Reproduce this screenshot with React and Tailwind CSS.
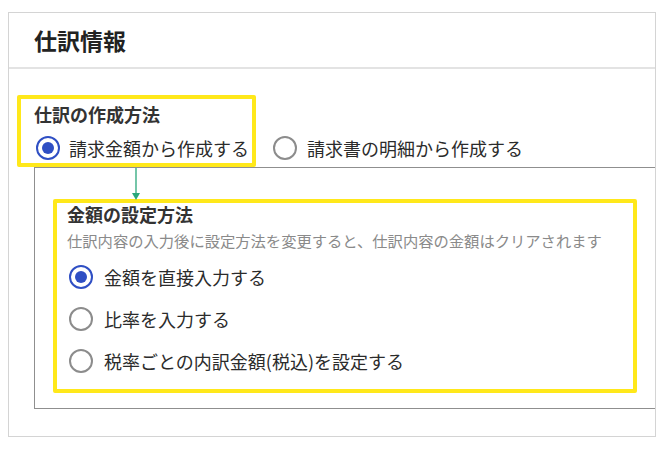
import React from "react";

const font = { fontFamily: '"Noto Sans CJK JP", "Noto Sans", sans-serif' };

function Radio({ checked }) {
  return checked ? (
    <span className="flex h-[24px] w-[24px] shrink-0 items-center justify-center rounded-full border-[2.5px] border-[#2f4fc4]">
      <span className="h-[12px] w-[12px] rounded-full bg-[#2f4fc4]" />
    </span>
  ) : (
    <span className="block h-[24px] w-[24px] shrink-0 rounded-full border-[2.5px] border-[#8c8c8c]" />
  );
}

function Option({ checked, label, gap = "gap-[9px]" }) {
  return (
    <label className={`flex h-[24px] items-center ${gap}`}>
      <span className="ml-[2px] block">
        <Radio checked={checked} />
      </span>
      <span className="text-[18px] leading-[24px] text-[#2b2b2b]">{label}</span>
    </label>
  );
}

const amountOptions = [
  { label: "金額を直接入力する", checked: true },
  { label: "比率を入力する", checked: false },
  { label: "税率ごとの内訳金額(税込)を設定する", checked: false },
];

export default function App() {
  return (
    <div className="min-h-[449px] w-[669px] bg-white pl-[8px] pt-[12px]" style={font}>
      <div className="w-[648px] overflow-hidden border border-[#d4d4d4] bg-white">
        <div className="flex h-[56px] items-center border-b-2 border-[#e3e3e3] pl-[25px]">
          <h2 className="text-[23px] font-bold leading-[30px] text-[#222]">仕訳情報</h2>
        </div>

        <div className="pb-[27px] pl-[8px] pt-[26px]">
          <div className="flex items-end">
            <div className="w-[239px] rounded-[2px] border-4 border-[#ffe81a] pb-[3px] pl-[13px] pt-[3px]">
              <div className="text-[18px] font-bold leading-[24px] text-[#333]">仕訳の作成方法</div>
              <div className="mt-[10px]">
                <Option checked label="請求金額から作成する" />
              </div>
            </div>
            <div className="mb-[7px] ml-[15px]">
              <Option checked={false} label="請求書の明細から作成する" gap="gap-[10px]" />
            </div>
          </div>

          <div className="relative ml-[17px] border border-r-0 border-[#8f8f8f] pb-[15px] pl-[18px] pt-[31px]">
            <svg
              className="absolute left-[96px] top-0"
              width="10"
              height="33"
              viewBox="0 0 10 33"
            >
              <line x1="5" y1="0" x2="5" y2="26" stroke="#2aa77a" strokeWidth="1.3" />
              <path d="M1 25 L9 25 L5 32 Z" fill="#2aa77a" />
            </svg>

            <div className="w-[584px] rounded-[2px] border-4 border-[#ffe81a] pb-[16px] pl-[10px]">
              <div className="text-[18px] font-bold leading-[22px] text-[#333]">金額の設定方法</div>
              <div className="mt-[5px] text-[15.3px] leading-[20px] text-[#8a8a8a]">
                仕訳内容の入力後に設定方法を変更すると、仕訳内容の金額はクリアされます
              </div>
              <div className="mt-[15px] flex flex-col gap-[18px]">
                {amountOptions.map((o) => (
                  <Option key={o.label} checked={o.checked} label={o.label} gap="gap-[11px]" />
                ))}
              </div>
            </div>
          </div>
        </div>
      </div>
    </div>
  );
}
